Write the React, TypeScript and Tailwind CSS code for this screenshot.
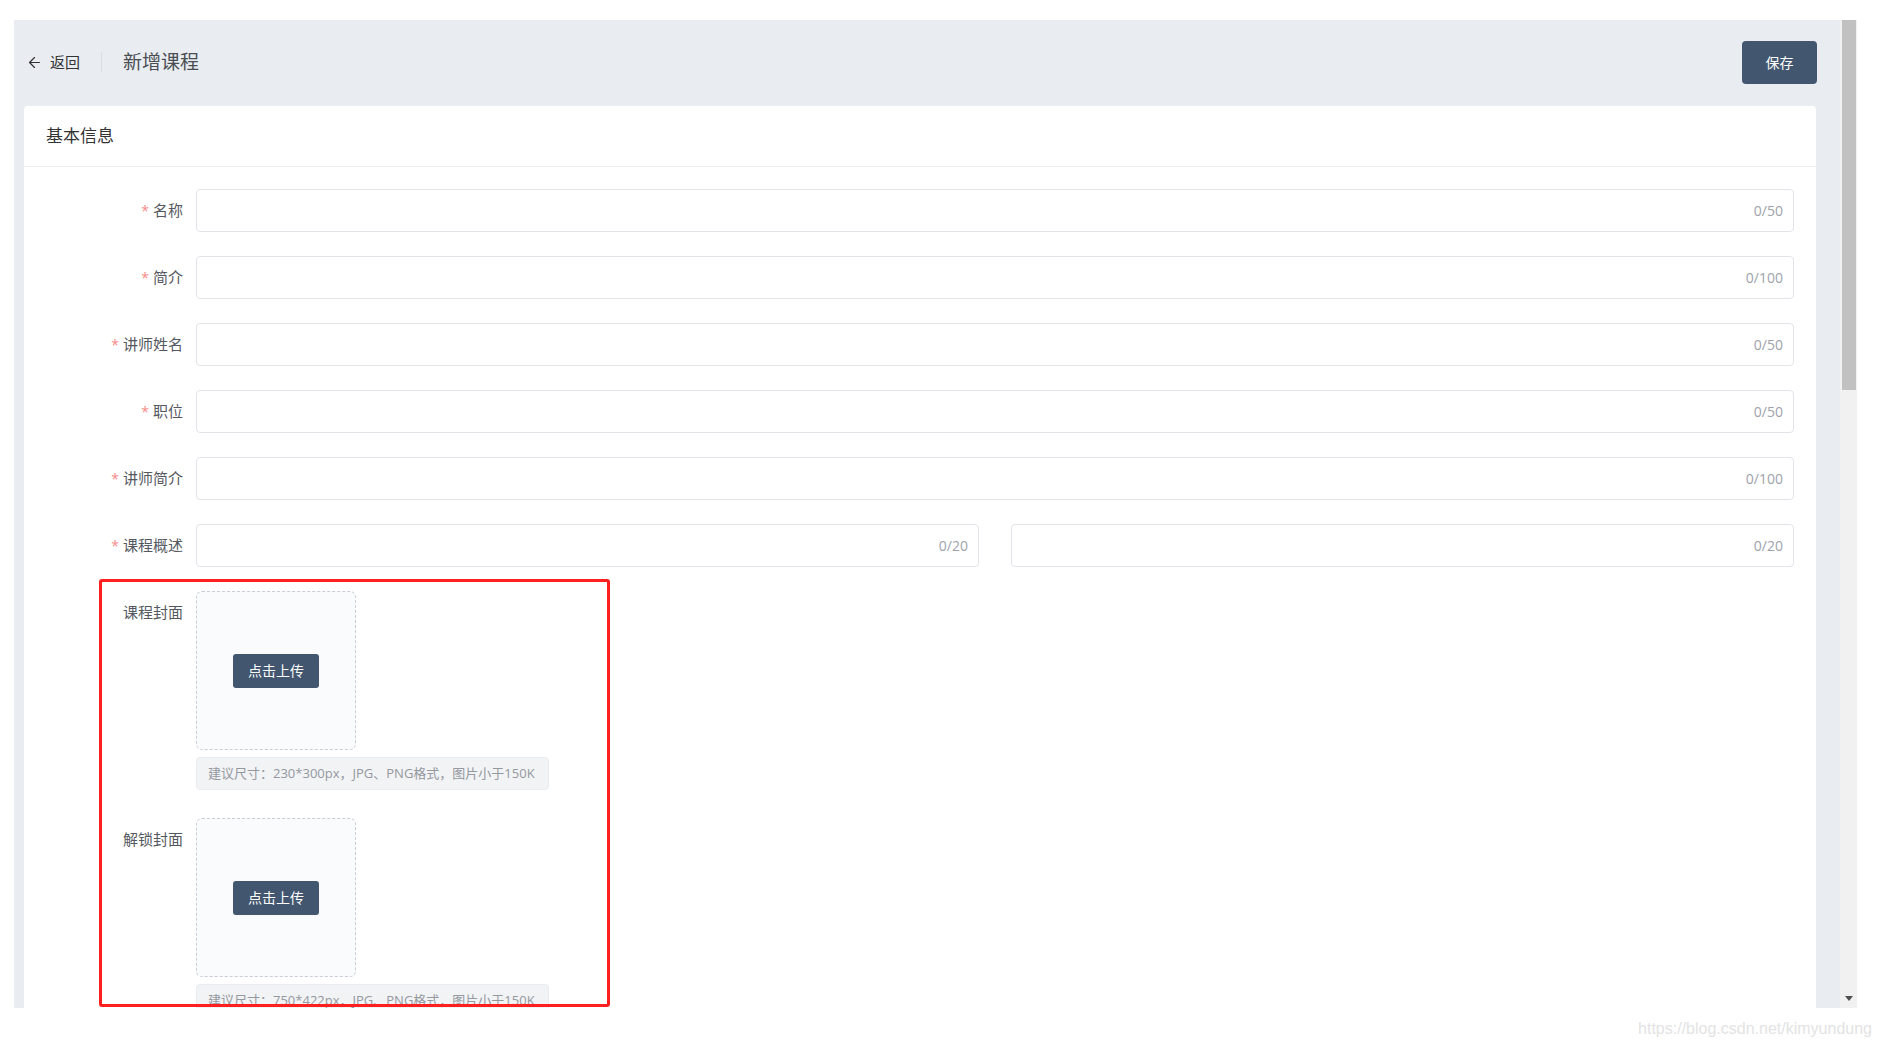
import { ArrowLeft } from "lucide-react";

const fields = [
  { label: "名称", max: "0/50" },
  { label: "简介", max: "0/100" },
  { label: "讲师姓名", max: "0/50" },
  { label: "职位", max: "0/50" },
  { label: "讲师简介", max: "0/100" },
];

function Counter({ text }: { text: string }) {
  return <span className="text-[14px] text-[#9ea2ab]">{text}</span>;
}

function TextInput({ max }: { max: string }) {
  return (
    <div className="flex-1 h-[43px] border border-[#e2e4ea] rounded-[4px] bg-white flex items-center justify-end pr-[10px]">
      <Counter text={max} />
    </div>
  );
}

function Label({ text, required }: { text: string; required?: boolean }) {
  return (
    <div className="w-[172px] shrink-0 pr-[13px] flex justify-end items-center text-[15px] text-[#55595f]">
      {required && <span className="text-[#f78989] mr-[4px] text-[14px]">*</span>}
      {text}
    </div>
  );
}

function UploadRow({ label, hint }: { label: string; hint: string }) {
  return (
    <div className="flex items-start">
      <div className="w-[172px] shrink-0 pr-[13px] pt-[10px] leading-[22px] text-right text-[15px] text-[#55595f]">
        {label}
      </div>
      <div className="flex flex-col">
        <div className="w-[160px] h-[159px] border border-dashed border-[#c9cdd6] rounded-[6px] bg-[#fafbfd] flex items-center justify-center">
          <button className="w-[86px] h-[34px] rounded-[3px] bg-[#42566f] text-white text-[14px]">
            点击上传
          </button>
        </div>
        <div className="mt-[7px] w-[353px] h-[33px] rounded-[4px] bg-[#f2f3f5] border border-[#eaebee] flex items-center pl-[11px] text-[13px] text-[#94989f] whitespace-nowrap">
          {hint}
        </div>
      </div>
    </div>
  );
}

export default function App() {
  return (
    <div
      className="relative w-[1881px] h-[1046px] bg-white overflow-hidden"
      style={{ fontFamily: '"Open Sans", "Noto Sans CJK SC", sans-serif' }}
    >
      <div className="ml-[14px] pt-[20px] flex">
        <div className="w-[1826px] h-[988px] bg-[#e9edf2] pl-[10px] pr-[24px] overflow-hidden flex flex-col">
          {/* top bar */}
          <div className="h-[84px] shrink-0 flex items-center justify-between pl-[2px] mr-[-1px]">
            <div className="flex items-center">
              <div className="flex items-center gap-[7px] text-[15px] text-[#333]">
                <ArrowLeft size={17} strokeWidth={1.7} />
                返回
              </div>
              <div className="w-px h-[20px] bg-[#d9dde3] mx-[21px]" />
              <div className="text-[19px] text-[#4a4d52]">新增课程</div>
            </div>
            <button className="w-[75px] h-[43px] rounded-[4px] bg-[#42566f] text-white text-[14px]">
              保存
            </button>
          </div>

          {/* card */}
          <div className="mt-[2px] flex-1 bg-white rounded-[4px]">
            <div className="h-[61px] border-b border-[#eceef2] flex items-center pl-[22px] text-[17px] text-[#333]">
              基本信息
            </div>
            <div className="pt-[22px] flex flex-col gap-[24px] pr-[22px]">
              {fields.map((f) => (
                <div key={f.label} className="flex items-center">
                  <Label text={f.label} required />
                  <TextInput max={f.max} />
                </div>
              ))}
              <div className="flex items-center">
                <Label text="课程概述" required />
                <div className="flex-1 flex gap-[32px]">
                  <TextInput max="0/20" />
                  <TextInput max="0/20" />
                </div>
              </div>
              <div className="flex flex-col gap-[28px]">
                <UploadRow label="课程封面" hint="建议尺寸：230*300px，JPG、PNG格式，图片小于150K" />
                <UploadRow label="解锁封面" hint="建议尺寸：750*422px，JPG、PNG格式，图片小于150K" />
              </div>
            </div>
          </div>
        </div>

        {/* scrollbar */}
        <div className="w-[17px] h-[988px] bg-[#f1f1f1] flex flex-col items-center">
          <div className="w-[14px] h-[370px] bg-[#c1c1c1]" />
          <div className="flex-1" />
          <svg width="8" height="5" viewBox="0 0 8 5" className="mb-[7px]">
            <path d="M0 0 L8 0 L4 5 Z" fill="#505050" />
          </svg>
        </div>
      </div>

      {/* annotation box */}
      <div className="absolute left-[99px] top-[579px] w-[511px] h-[428px] border-[3px] border-[#ff1f1f] rounded-[3px] pointer-events-none" />

      {/* watermark */}
      <div
        className="absolute right-[9px] top-[1017px] text-[16px] text-[#e3e3e3]"
        style={{ fontFamily: '"Liberation Sans", Arial, sans-serif' }}
      >
        https://blog.csdn.net/kimyundung
      </div>
    </div>
  );
}
